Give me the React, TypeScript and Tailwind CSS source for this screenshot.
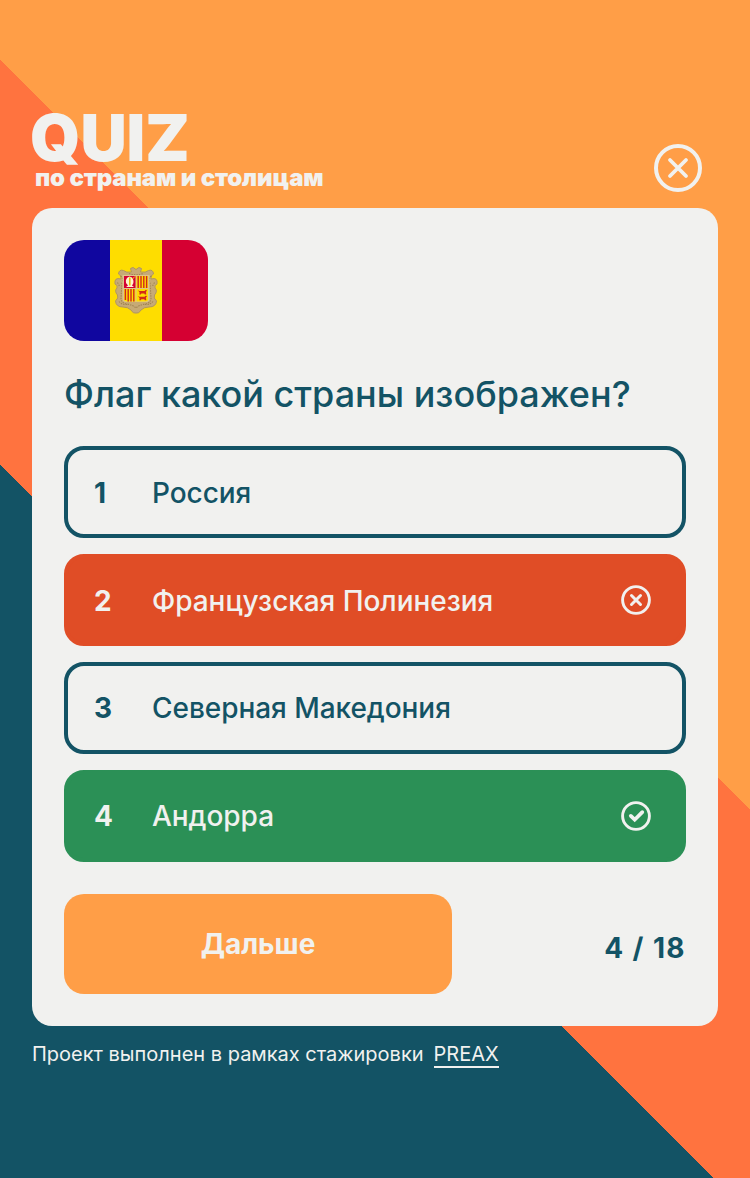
import React from "react";

const LIGHT = "#f1f1ef";

function CrossCircle({ className }: { className: string }) {
  return (
    <svg viewBox="0 0 48 48" className={className} fill="none" stroke={LIGHT} strokeWidth="4" strokeLinecap="round">
      <circle cx="24" cy="24" r="22" />
      <path strokeWidth="3.8" d="M16 16L32 32M32 16L16 32" />
    </svg>
  );
}

function WrongIcon() {
  return (
    <svg viewBox="0 0 32 32" className="size-8" fill="none" stroke={LIGHT} strokeWidth="3" strokeLinecap="round">
      <circle cx="16" cy="16" r="13.4" strokeWidth="2.9" />
      <path d="M11.500 11.500L20.500 20.500M20.500 11.500L11.500 20.500" />
    </svg>
  );
}

function RightIcon() {
  return (
    <svg viewBox="0 0 32 32" className="size-8" fill="none" stroke={LIGHT} strokeWidth="3.7" strokeLinecap="round">
      <circle cx="16" cy="16" r="13.4" strokeWidth="2.9" />
      <path d="M10.800 15.900L14.700 19.700L22.300 12.100" />
    </svg>
  );
}

function Flag() {
  return (
    <svg viewBox="0 0 144 101" className="block h-[101px] w-36 rounded-[20px]">
      <path fill="#10069f" d="M0 0h46v101H0z" />
      <path fill="#fedd00" d="M46 0h52v101H46z" />
      <path fill="#d50032" d="M98 0h46v101H98z" />
      <path
        fill="#c6aa76"
        stroke="#b09660"
        strokeWidth="1"
        d="M72 29.5Q69 26 66.5 28.5L67.5 32Q62 33 59.5 30.5Q55 29 54.5 34Q58 35.5 57 39Q50 37 51 44Q54 45 53 48Q50 51 53.500 55Q55 58 51.500 61Q52 67 59 67Q64 67 67 70Q69 74 72 73Q75 74 77 70Q80 67 85 67Q92 67 92.500 61Q89 58 90.500 55Q94 51 91 48Q90 45 93 44Q94 37 87 39Q86 35.500 89.500 34Q89 29 84.500 30.500Q82 33 76.500 32L77.500 28.500Q75 26 72 29.500Z"
      />
      <path
        fill="none"
        stroke="#a18452"
        strokeWidth="1.1"
        strokeDasharray="1.4 1.1"
        d="M56.5 36Q60 38 58 43L57 58Q57 63 63 64Q69 65 72 68Q75 65 81 64Q87 63 87 58L86 43Q84 38 87.5 36M65 33.500Q72 36 79 33.500M53.500 42.500L55.500 46M90.500 42.500L88.500 46M55 61.500Q58 65 63 64.500M89 61.500Q86 65 81 64.500"
      />
      <path fill="#ddc58b" d="M58.500 35h27v24q0 3-3 3h-21q-3 0-3-3z" />
      <path fill="#d50032" d="M60 36h11.500v12H60z" />
      <path fill="#fedd00" d="M72.500 36H84v12H72.500zM60 49h11.500v12.500h-9q-2.500 0-2.500-2.500zM72.500 49H84v10q0 2.500-2.500 2.500h-9z" />
      <path stroke="#d0271d" strokeWidth="1.4" d="M74.200 36v12M77 36v12M79.800 36v12M82.600 36v12M61.400 49v11M64.200 49v12.500M67 49v12.500M69.800 49v12.500" />
      <path fill="#fff2ce" d="M65.500 36.500Q61 38 62 43L64 45.500L62 47H70L68 45.500Q71 42 68 37.500Z" />
      <path stroke="#e8b900" strokeWidth="1.5" d="M65.800 37.500v8" />
      <path stroke="#fedd00" strokeWidth="1" d="M70.800 36.500L68.500 39" />
      <path fill="#d32b16" d="M74 50.200l1.500.7h5l1.500-1.200 1 1-1 1 .3 2.800h-1.500l-.5-1h-3l-.5 1h-1.500l.3-2zM74 56l1.500.7h5l1.500-1.200 1 1-1 1 .3 2.800h-1.500l-.5-1h-3l-.5 1h-1.500l.3-2z" />
    </svg>
  );
}

type Status = "idle" | "wrong" | "right";

const options: { label: string; status: Status; nudge: string }[] = [
  { label: "Россия", status: "idle", nudge: "pt-0.5" },
  { label: "Французская Полинезия", status: "wrong", nudge: "pt-0.5" },
  { label: "Северная Македония", status: "idle", nudge: "" },
  { label: "Андорра", status: "right", nudge: "" },
];

const tones: Record<Status, string> = {
  idle: "border-[#135365] text-[#135365]",
  wrong: "border-[#e04d26] bg-[#e04d26] text-[#f1f1ef]",
  right: "border-[#2b9056] bg-[#2b9056] text-[#f1f1ef]",
};

export default function App() {
  return (
    <div className="flex h-[1178px] w-[750px] flex-col overflow-hidden bg-[linear-gradient(45deg,#135365_37%,#ff733f_37%,#ff733f_58%,#ff9e47_58%)] px-8 pt-[104px] font-['Inter',sans-serif] text-[#f1f1ef]">
      <header className="flex h-[104px] items-start justify-between">
        <div>
          <h1 className="-ml-0.5 h-[62px] pt-px text-[64px] leading-[66px] font-black">QUIZ</h1>
          <p className="ml-[3px] text-[24px] leading-6 font-black tracking-[-0.18px] whitespace-nowrap">по странам и столицам</p>
        </div>
        <button className="mt-10 mr-4" aria-label="Закрыть">
          <CrossCircle className="size-12" />
        </button>
      </header>

      <main className="h-[818px] w-[686px] rounded-[20px] bg-[#f1f1ef] p-8 text-[#135365]">
        <Flag />
        <h2 className="mt-[31px] mb-[30px] text-[36px] leading-[44px] font-medium whitespace-nowrap">Флаг какой страны изображен?</h2>
        <ul className="flex flex-col gap-4">
          {options.map(({ label, status, nudge }, i) => (
            <li key={label} className={`flex h-[92px] items-center rounded-[20px] border-4 pr-[30px] pl-[26px] text-[28px] ${tones[status]}`}>
              <span className={`w-[58px] font-bold ${nudge}`}>{i + 1}</span>
              <span className={`flex-1 font-medium tracking-[-0.05px] whitespace-nowrap ${nudge}`}>{label}</span>
              {status === "wrong" && <WrongIcon />}
              {status === "right" && <RightIcon />}
            </li>
          ))}
        </ul>
        <div className="mt-8 flex h-[100px] justify-between">
          <button className="w-[388px] rounded-[20px] bg-[#ff9e47] text-[28px] font-bold text-[#f1f1ef]">Дальше</button>
          <span className="mt-[33px] text-[28px] leading-[42px] font-bold tracking-[0.05em]">4 / 18</span>
        </div>
      </main>

      <footer className="mt-4 flex gap-2.5 text-[20px] leading-6 whitespace-nowrap">
        <span>Проект выполнен в рамках стажировки</span>
        <a className="h-[26px] border-b-2 border-[#f1f1ef]">PREAX</a>
      </footer>
    </div>
  );
}
